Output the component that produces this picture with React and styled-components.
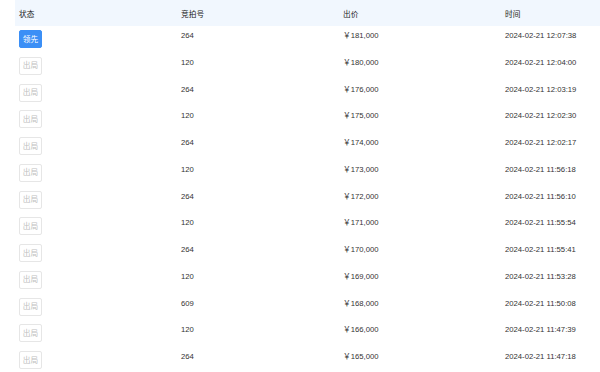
import { createGlobalStyle, styled } from "styled-components";

const rows = [
  ["lead", "264", "181,000", "12:07:38"],
  ["out", "120", "180,000", "12:04:00"],
  ["out", "264", "176,000", "12:03:19"],
  ["out", "120", "175,000", "12:02:30"],
  ["out", "264", "174,000", "12:02:17"],
  ["out", "120", "173,000", "11:56:18"],
  ["out", "264", "172,000", "11:56:10"],
  ["out", "120", "171,000", "11:55:54"],
  ["out", "264", "170,000", "11:55:41"],
  ["out", "120", "169,000", "11:53:28"],
  ["out", "609", "168,000", "11:50:08"],
  ["out", "120", "166,000", "11:47:39"],
  ["out", "264", "165,000", "11:47:18"],
];

const GlobalStyle = createGlobalStyle`
  html, body {
    margin: 0;
    background: #fff;
    overflow: hidden;
    font-family: "Liberation Sans", "Noto Sans CJK SC", sans-serif;
  }
`;

const App = () => {
  return (
    <Page>
      <GlobalStyle />
      <Table>
        <thead>
          <tr>
            <Th>状态</Th>
            <Th>竞拍号</Th>
            <Th>出价</Th>
            <Th>时间</Th>
          </tr>
        </thead>
        <tbody>
          {rows.map(([status, no, price, time], idx) => (
            <tr key={idx}>
              <Td>
                <Tag $lead={status === "lead"}>
                  {status === "lead" ? "领先" : "出局"}
                </Tag>
              </Td>
              <Td>{no}</Td>
              <Td>￥{price}</Td>
              <Td>2024-02-21 {time}</Td>
            </tr>
          ))}
        </tbody>
      </Table>
    </Page>
  );
};

const Page = styled.div`
  width: 100%;
  box-sizing: border-box;
  padding-left: 15px;
  overflow: hidden;
`;

const Table = styled.table`
  width: 648px;
  border-collapse: collapse;
  table-layout: fixed;
  color: #333;
  font-size: 7.7px;
`;

const Th = styled.th`
  height: 26px;
  padding: 0 4px;
  text-align: left;
  font-weight: normal;
  background: #f1f7fe;
  color: #222;
`;

const Td = styled.td`
  height: 26.75px;
  box-sizing: border-box;
  padding: 5px 4px 0;
  vertical-align: top;
  line-height: 9px;
`;

const Tag = styled.span`
  display: inline-flex;
  align-items: center;
  justify-content: center;
  width: 23px;
  height: 18px;
  margin-top: -1px;
  box-sizing: border-box;
  border-radius: 2px;
  font-size: 7.7px;
  border: 1px solid ${(p) => (p.$lead ? "#3b8ff6" : "#e6e6e6")};
  background: ${(p) => (p.$lead ? "#3b8ff6" : "#fff")};
  color: ${(p) => (p.$lead ? "#fff" : "#c0c0c0")};
`;

export default App;
